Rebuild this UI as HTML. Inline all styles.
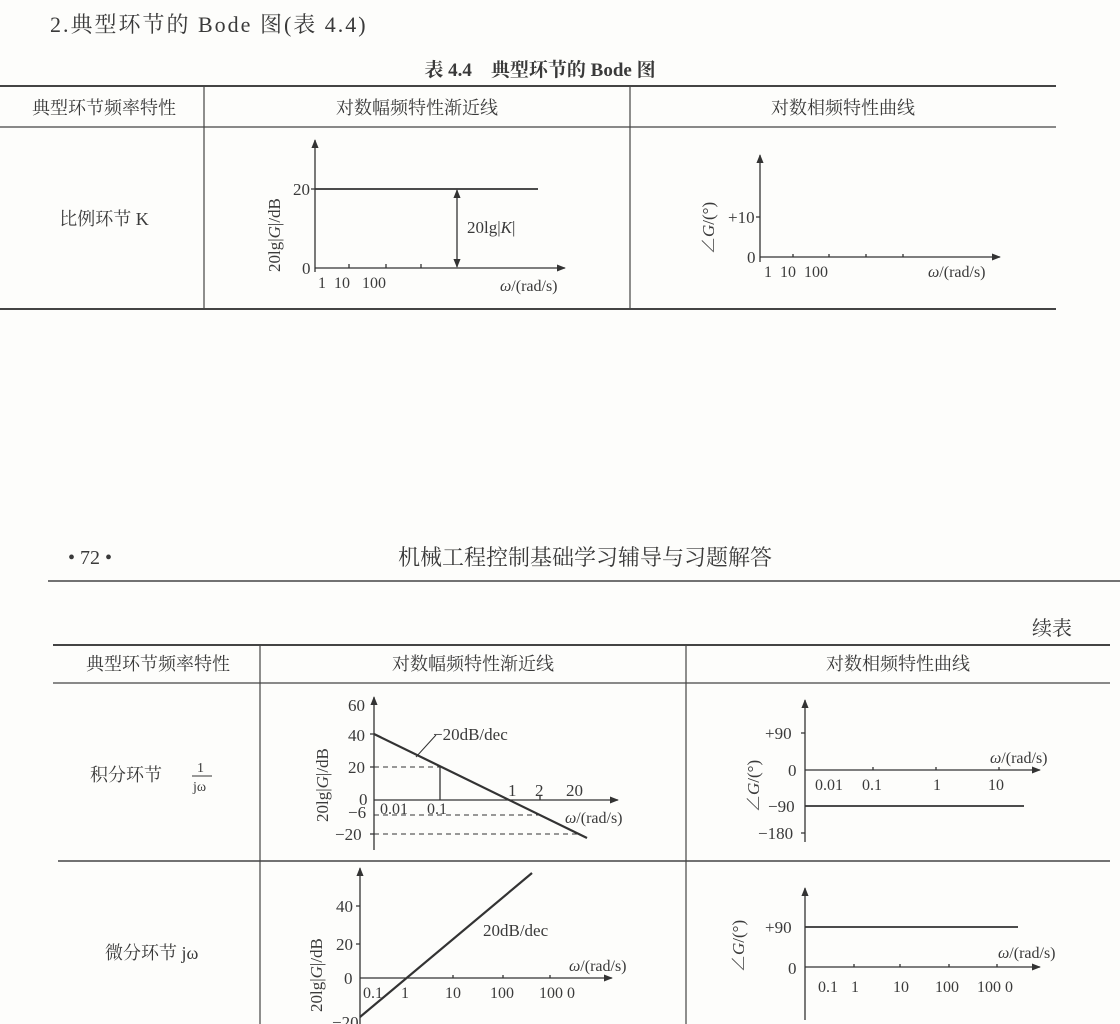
<!DOCTYPE html>
<html><head><meta charset="utf-8"><style>
html,body{margin:0;padding:0;background:#fdfdfb;}
svg{display:block}
text{font-family:"Liberation Serif","Noto Serif CJK SC",serif;fill:#3a3a3a;}
.cj{font-family:"Liberation Serif","Noto Serif CJK SC","Noto Sans CJK SC",serif;}
</style></head><body>
<svg width="1120" height="1024" viewBox="0 0 1120 1024" xmlns="http://www.w3.org/2000/svg">
<defs>
<marker id="ar" viewBox="0 0 10 10" refX="9" refY="5" markerWidth="9" markerHeight="9" orient="auto-start-reverse" markerUnits="userSpaceOnUse"><path d="M0,1 L10,5 L0,9 Z" fill="#333"/></marker>
</defs>
<g stroke="#444" fill="none">
<line x1="0" y1="86" x2="1056" y2="86" stroke-width="2"/>
<line x1="0" y1="127" x2="1056" y2="127" stroke-width="1.2"/>
<line x1="0" y1="309" x2="1056" y2="309" stroke-width="2"/>
<line x1="204" y1="86" x2="204" y2="309" stroke-width="1.2"/>
<line x1="630" y1="86" x2="630" y2="309" stroke-width="1.2"/>
<line x1="48" y1="581" x2="1120" y2="581" stroke-width="1.5"/>
<line x1="53" y1="645" x2="1110" y2="645" stroke-width="2"/>
<line x1="53" y1="683" x2="1110" y2="683" stroke-width="1.2"/>
<line x1="58" y1="861" x2="1110" y2="861" stroke-width="1.5"/>
<line x1="260" y1="645" x2="260" y2="1024" stroke-width="1.2"/>
<line x1="686" y1="645" x2="686" y2="1024" stroke-width="1.2"/>
</g>
<g stroke="#333" stroke-width="1.3" fill="none">
<line x1="315" y1="272" x2="315" y2="140" marker-end="url(#ar)"/>
<line x1="315" y1="268" x2="565" y2="268" marker-end="url(#ar)"/>
<line x1="315" y1="189" x2="538" y2="189" stroke-width="1.8"/>
<line x1="457" y1="190" x2="457" y2="267" marker-start="url(#ar)" marker-end="url(#ar)"/>
<path d="M349,268v-4M386,268v-4M421,268v-4M311,189h4"/>
<line x1="760" y1="262" x2="760" y2="155" marker-end="url(#ar)"/>
<line x1="760" y1="257" x2="1000" y2="257" marker-end="url(#ar)"/>
<path d="M756,217h4M793,257v-3M829,257v-3M866,257v-3M903,257v-3"/>
<line x1="374" y1="850" x2="374" y2="697" marker-end="url(#ar)"/>
<line x1="374" y1="800" x2="618" y2="800" marker-end="url(#ar)"/>
<line x1="374" y1="734" x2="587" y2="838" stroke-width="2.2"/>
<path d="M374,767H440M374,815H540M374,834H580" stroke-dasharray="5,4" stroke-width="1"/>
<line x1="440" y1="767" x2="440" y2="800"/>
<path d="M370,734h4M370,767h4M370,834h4M540,800v-4"/>
<line x1="805" y1="842" x2="805" y2="700" marker-end="url(#ar)"/>
<line x1="805" y1="770" x2="1040" y2="770" marker-end="url(#ar)"/>
<line x1="805" y1="806" x2="1024" y2="806" stroke-width="1.8"/>
<path d="M801,733h4M801,833h4M873,770v-3M936,770v-3M999,770v-3"/>
<line x1="360" y1="1024" x2="360" y2="868" marker-end="url(#ar)"/>
<line x1="360" y1="978" x2="612" y2="978" marker-end="url(#ar)"/>
<line x1="360" y1="1017" x2="532" y2="873" stroke-width="2.2"/>
<path d="M356,906h4M356,944h4M453,978v-3M503,978v-3M550,978v-3"/>
<line x1="805" y1="1020" x2="805" y2="888" marker-end="url(#ar)"/>
<line x1="805" y1="967" x2="1040" y2="967" marker-end="url(#ar)"/>
<line x1="805" y1="927" x2="1018" y2="927" stroke-width="1.8"/>
<path d="M854,967v-3M900,967v-3M949,967v-3M997,967v-3"/>
</g>
<text x="50" y="32" font-size="22" letter-spacing="2" class="cj" fill="#555">2.典型环节的 Bode 图(表 4.4)</text>
<text x="540" y="76" font-size="19" font-weight="bold" text-anchor="middle" class="cj">表 4.4　典型环节的 Bode 图</text>
<g font-size="18" class="cj" text-anchor="middle">
<text x="104" y="114">典型环节频率特性</text>
<text x="417" y="114">对数幅频特性渐近线</text>
<text x="843" y="114">对数相频特性曲线</text>
<text x="104" y="225">比例环节 K</text>
<text x="158" y="670">典型环节频率特性</text>
<text x="473" y="670">对数幅频特性渐近线</text>
<text x="898" y="670">对数相频特性曲线</text>
</g>
<text x="68" y="564" font-size="20" fill="#555">• 72 •</text>
<text x="585" y="565" font-size="22" text-anchor="middle" class="cj">机械工程控制基础学习辅导与习题解答</text>
<text x="1032" y="635" font-size="20" class="cj">续表</text>
<g font-size="18" class="cj">
<text x="90" y="781">积分环节</text>
<text x="105" y="959">微分环节 jω</text>
</g>
<text x="197" y="772" font-size="14">1</text>
<line x1="192" y1="776" x2="212" y2="776" stroke="#333"/>
<text x="193" y="791" font-size="14">jω</text>
<g font-size="17">
<text x="293" y="195">20</text><text x="302" y="274">0</text>
<text x="318" y="288" font-size="16">1&#160;&#160;10&#160;&#160;&#160;100</text>
<text x="467" y="233">20lg|<tspan font-style="italic">K</tspan>|</text>
<text x="500" y="291" font-size="16"><tspan font-style="italic">ω</tspan>/(rad/s)</text>
<text transform="translate(280,272) rotate(-90)" font-size="17">20lg|<tspan font-style="italic">G</tspan>|/dB</text>
<text x="728" y="223">+10</text><text x="747" y="263">0</text>
<text x="764" y="277" font-size="16">1&#160;&#160;10&#160;&#160;100</text>
<text x="928" y="277" font-size="16"><tspan font-style="italic">ω</tspan>/(rad/s)</text>
<text transform="translate(714,254) rotate(-90)" font-size="17">∠<tspan font-style="italic">G</tspan>/(°)</text>
<text x="348" y="711">60</text><text x="348" y="741">40</text><text x="348" y="773">20</text>
<text x="359" y="805">0</text><text x="348" y="818">−6</text><text x="335" y="840">−20</text>
<text x="380" y="814" font-size="16">0.01</text><text x="427" y="814" font-size="16">0.1</text>
<text x="508" y="796">1</text><text x="535" y="796">2</text><text x="566" y="796">20</text>
<text x="565" y="823" font-size="16"><tspan font-style="italic">ω</tspan>/(rad/s)</text>
<text x="433" y="740">−20dB/dec</text>
<line x1="416" y1="757" x2="436" y2="735" stroke="#333" stroke-width="1"/>
<text transform="translate(328,822) rotate(-90)" font-size="17">20lg|<tspan font-style="italic">G</tspan>|/dB</text>
<text x="765" y="739">+90</text><text x="788" y="776">0</text>
<text x="768" y="812">−90</text><text x="758" y="839">−180</text>
<text x="815" y="790" font-size="16">0.01</text><text x="862" y="790" font-size="16">0.1</text>
<text x="933" y="790" font-size="16">1</text><text x="988" y="790" font-size="16">10</text>
<text x="990" y="763" font-size="16"><tspan font-style="italic">ω</tspan>/(rad/s)</text>
<text transform="translate(759,812) rotate(-90)" font-size="17">∠<tspan font-style="italic">G</tspan>/(°)</text>
<text x="336" y="912">40</text><text x="336" y="950">20</text><text x="344" y="984">0</text><text x="332" y="1028">−20</text>
<text x="363" y="998" font-size="16">0.1</text><text x="401" y="998" font-size="16">1</text>
<text x="445" y="998" font-size="16">10</text><text x="490" y="998" font-size="16">100</text>
<text x="539" y="998" font-size="16">100&#160;0</text>
<text x="483" y="936">20dB/dec</text>
<text x="569" y="971" font-size="16"><tspan font-style="italic">ω</tspan>/(rad/s)</text>
<text transform="translate(322,1012) rotate(-90)" font-size="17">20lg|<tspan font-style="italic">G</tspan>|/dB</text>
<text x="765" y="933">+90</text><text x="788" y="974">0</text>
<text x="818" y="992" font-size="16">0.1</text><text x="851" y="992" font-size="16">1</text>
<text x="893" y="992" font-size="16">10</text><text x="935" y="992" font-size="16">100</text>
<text x="977" y="992" font-size="16">100&#160;0</text>
<text x="998" y="958" font-size="16"><tspan font-style="italic">ω</tspan>/(rad/s)</text>
<text transform="translate(744,972) rotate(-90)" font-size="17">∠<tspan font-style="italic">G</tspan>/(°)</text>
</g>
</svg>
</body></html>
